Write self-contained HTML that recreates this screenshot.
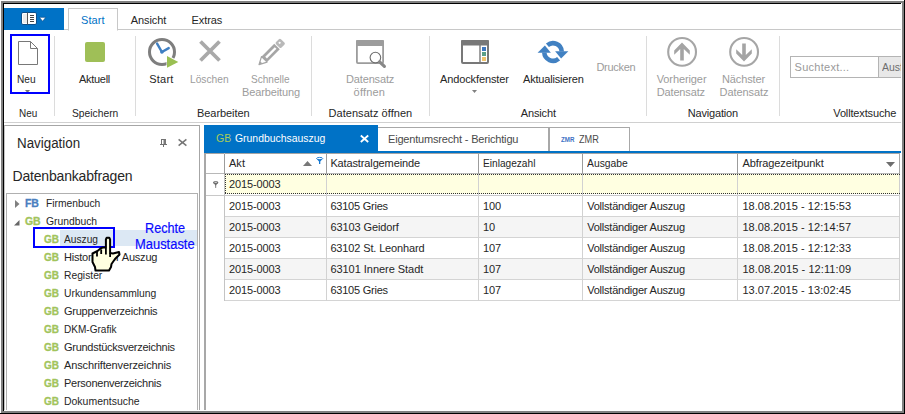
<!DOCTYPE html>
<html lang="de"><head><meta charset="utf-8"><title>Grundbuchsauszug</title>
<style>
html,body{margin:0;padding:0;}
body{width:905px;height:414px;position:relative;overflow:hidden;background:#fff;font-family:"Liberation Sans",sans-serif;font-size:11px;line-height:11px;color:#262626;}
.a{position:absolute;}
.t{position:absolute;white-space:nowrap;font-size:11px;line-height:11px;}
.sep{position:absolute;top:36px;width:1px;height:80px;background:#dcdcdc;}
svg{position:absolute;overflow:visible;}

</style></head><body>
<!-- window frame -->
<div class="a" style="left:1px;top:1px;width:899px;height:408px;border:2px solid #808080;"></div>
<div class="a" style="left:3px;top:3px;width:898px;height:1px;background:#000;"></div>
<div class="a" style="left:3px;top:3px;width:1px;height:408px;background:#000;"></div>
<div class="a" style="left:904px;top:0;width:1px;height:414px;background:#000;"></div>
<div class="a" style="left:0;top:413px;width:905px;height:1px;background:#000;"></div>

<!-- ribbon tab strip -->
<div class="a" style="left:4px;top:8px;width:60px;height:22px;background:#0072c6;"></div>
<div class="a" style="left:64px;top:29px;width:837px;height:1px;background:#c8c8c8;"></div>
<div class="a" style="left:68px;top:8px;width:48px;height:21px;border:1px solid #c8c8c8;border-bottom:1px solid #fff;background:#fff;"></div>
<!-- app button icon -->
<svg style="left:21px;top:12px" width="26" height="14" viewBox="0 0 26 14">
 <rect x="0.5" y="0.5" width="15" height="12" rx="1.5" fill="#fff" stroke="#0a4f8c"/>
 <rect x="2" y="2" width="4" height="9" fill="#ececec"/>
 <rect x="6" y="0.5" width="1" height="12" fill="#555"/>
 <path d="M9 3.5h4M9 5.5h4M9 7.5h4M9 9.5h4" stroke="#444" stroke-width="1"/>
 <path d="M18.300 5.300h6.600l-3.300 4z" fill="#fff" stroke="#0a4f8c" stroke-width="0.700"/>
</svg>

<!-- ribbon bottom -->
<div class="a" style="left:4px;top:122px;width:897px;height:1px;background:#d0d0d0;"></div>
<div class="sep" style="left:54px"></div>
<div class="sep" style="left:135px"></div>
<div class="sep" style="left:311px"></div>
<div class="sep" style="left:429px"></div>
<div class="sep" style="left:646px"></div>
<div class="sep" style="left:779px"></div>

<!-- Neu highlight box -->
<div class="a" style="left:10px;top:34px;width:36px;height:56px;border:2px solid #0000ff;z-index:3;"></div>
<!-- page icon -->
<svg style="left:18px;top:41px" width="20" height="24" viewBox="0 0 20 24">
 <path d="M0.5 0.5h12l7 7v16h-19z" fill="#fff" stroke="#787878"/>
 <path d="M12.5 0.5v7h7" fill="none" stroke="#787878"/>
</svg>
<svg style="left:25px;top:90px" width="5" height="3" viewBox="0 0 5 3"><path d="M0 0h5l-2.500 3z" fill="#777"/></svg>
<!-- green square -->
<div class="a" style="left:85px;top:42px;width:20px;height:20px;border-radius:2px;background:#9fbf57;"></div>
<!-- clock -->
<svg style="left:147px;top:37px" width="32" height="32" viewBox="0 0 32 32">
 <circle cx="15" cy="15" r="12.5" fill="#fff" stroke="#7e7e7e" stroke-width="3"/>
 <path d="M10.100 6.600l4.800 8.400 6.800-3.900" fill="none" stroke="#3f7fc2" stroke-width="2.400" stroke-linecap="round" stroke-linejoin="round"/>
 <circle cx="14.900" cy="15" r="1.800" fill="#3f7fc2"/>
 <path d="M19.500 17.500v14l13-7z" fill="#fff"/>
 <path d="M20 19v11.800l11.300-5.900z" fill="#9abf52"/>
</svg>
<!-- X -->
<svg style="left:199px;top:40px" width="22" height="22" viewBox="0 0 22 22">
 <path d="M1.500 1.500l19 19M20.500 1.500l-19 19" stroke="#a9a9a9" stroke-width="3.800"/>
</svg>
<!-- pencil -->
<svg style="left:259px;top:38px" width="27" height="27" viewBox="0 0 27 27">
 <g transform="translate(0,26.600) rotate(-45)">
  <path d="M0 0l7.500-3.900v7.800z" fill="#fff" stroke="#a6a6a6" stroke-width="1.200" stroke-linejoin="round"/>
  <path d="M0 0l3.200-1.700v3.400z" fill="#a6a6a6"/>
  <rect x="7.500" y="-3.900" width="18" height="7.800" fill="#a6a6a6"/>
  <rect x="10" y="-1.200" width="13.500" height="2.400" fill="#fff"/>
  <rect x="26.500" y="-3.900" width="7" height="7.800" rx="1.500" fill="#b9b9b9"/>
  <circle cx="30" cy="-0.800" r="1.100" fill="#fff"/>
 </g>
</svg>
<!-- window + magnifier -->
<svg style="left:356px;top:40px" width="31" height="28" viewBox="0 0 31 28">
 <rect x="0.900" y="0.900" width="26.200" height="22.200" rx="1" fill="#fff" stroke="#9c9c9c" stroke-width="1.800"/>
 <rect x="0" y="0" width="28" height="6" rx="1" fill="#9c9c9c"/>
 <circle cx="19.400" cy="17.600" r="5.300" fill="#fff" stroke="#6c6c6c" stroke-width="1.100"/>
 <path d="M23.600 21.800l4.800 4.600" stroke="#888" stroke-width="3.200" stroke-linecap="round"/>
</svg>
<!-- dock window -->
<svg style="left:461px;top:40px" width="28" height="24" viewBox="0 0 28 24">
 <rect x="1" y="1" width="26" height="22" rx="1" fill="#fff" stroke="#787878" stroke-width="2"/>
 <rect x="0" y="0" width="28" height="5.500" rx="1" fill="#787878"/>
 <rect x="18.300" y="5" width="1.400" height="18" fill="#787878"/>
 <rect x="21" y="7" width="4" height="4" fill="#3f78bf"/>
 <rect x="21" y="12" width="4" height="4" fill="#5a9e86"/>
 <rect x="21" y="17" width="4" height="4" fill="#f0c36d"/>
</svg>
<svg style="left:472px;top:90px" width="5" height="3" viewBox="0 0 5 3"><path d="M0 0h5l-2.500 3z" fill="#808080"/></svg>
<!-- refresh -->
<svg style="left:537px;top:40px" width="32" height="24" viewBox="0 0 32 24">
 <path d="M10.400 5.300A8.700 8.700 0 0 1 24.700 11.500" fill="none" stroke="#4181c2" stroke-width="4.600"/>
 <path d="M18.100 11.200h13.300l-7.300 7.300z" fill="#4181c2"/>
 <path d="M21.600 18.700A8.700 8.700 0 0 1 7.300 12.500" fill="none" stroke="#4181c2" stroke-width="4.600"/>
 <path d="M13.900 12.800h-13.300l7.300-7.300z" fill="#4181c2"/>
</svg>
<!-- up/down circles -->
<svg style="left:667px;top:37px" width="30" height="30" viewBox="0 0 30 30">
 <circle cx="15.100" cy="14.900" r="13.900" fill="#fff" stroke="#a6a6a6" stroke-width="2.100"/>
 <path d="M15 5.600l7.800 8v4.200l-6-5.800v11.500h-3.600v-11.500l-6 5.800v-4.200z" fill="#a4a4a4"/>
</svg>
<svg style="left:729px;top:37px" width="30" height="30" viewBox="0 0 30 30">
 <circle cx="15.100" cy="14.900" r="13.900" fill="#fff" stroke="#a6a6a6" stroke-width="2.100"/>
 <path d="M15 24.400l7.800-8v-4.200l-6 5.800v-11.500h-3.600v11.500l-6-5.800v4.200z" fill="#a4a4a4"/>
</svg>
<!-- search box -->
<div class="a" style="left:790px;top:56px;width:110px;height:20px;border:1px solid #b4b4b4;border-right:none;background:#fff;"></div>
<div class="a" style="left:878px;top:57px;width:22px;height:20px;background:#e8e8e8;border-left:1px solid #b4b4b4;overflow:hidden;"><span class="t" style="left:3px;top:5px;color:#6e6e6e;transform:scaleX(0.950);transform-origin:0 0;">Ausführen</span></div>

<!-- nav panel -->
<div class="a" style="left:4px;top:125px;width:194px;height:284px;border:1px solid #a6a6a6;border-left-color:#c4c4c4;border-bottom:none;"></div>
<div class="a" style="left:6px;top:193px;width:190px;height:216px;border:1px solid #b0b0b0;border-bottom:none;"></div>
<!-- pin / close -->
<svg style="left:160px;top:139px" width="7" height="8" viewBox="0 0 7 8">
 <rect x="1.500" y="0.500" width="4" height="5" fill="#fff" stroke="#707070" stroke-width="1"/>
 <rect x="3.500" y="0.500" width="2.500" height="5" fill="#7a7a7a"/>
 <path d="M0 5.500h7M3.500 6v2" fill="none" stroke="#707070" stroke-width="1"/>
</svg>
<svg style="left:178px;top:139px" width="9" height="7" viewBox="0 0 9 7">
 <path d="M0.600 0.300l7.800 6.400M8.400 0.300l-7.800 6.400" stroke="#767676" stroke-width="1.500"/>
</svg>
<!-- tree arrows -->
<svg style="left:15px;top:200px" width="5" height="8" viewBox="0 0 5 8"><path d="M0 0l4.500 4-4.500 4z" fill="#808080"/></svg>
<svg style="left:14px;top:219.500px" width="6" height="6" viewBox="0 0 6 6"><path d="M5.500 0v5.500h-5.500z" fill="#666"/></svg>
<!-- selection -->
<div class="a" style="left:60px;top:230px;width:137px;height:16px;background:#dce8f4;"></div>
<div class="a" style="left:33px;top:227px;width:78px;height:17px;border:2px solid #0000ff;z-index:4;"></div>
<!-- hand cursor -->
<svg style="left:88px;top:234px;z-index:6" width="36" height="40" viewBox="0 0 36 40">
 <path d="M17.900 5.500l0.800-1.700h2.600l0.800 1.700v13.500l2.900 0.500 6-1.500 0.500 2.500-4.500 4.500-3.500 5-0.500 3-2 3.500h-13.500l-0.500-3.500-2.500-5v-8.500l3-1.500 2-1 3-2.500 2-1h3.400z" fill="#ffffe1" stroke="#000" stroke-width="2" stroke-linejoin="round"/>
 <path d="M17.900 13.500v7M13.200 15.500v4.500M9 18v4.500M22.100 19v4" fill="none" stroke="#000" stroke-width="1.800"/>
</svg>

<!-- doc tabs -->
<div class="a" style="left:204px;top:125px;width:174px;height:27px;background:#0072c6;"></div>
<div class="a" style="left:204px;top:151px;width:697px;height:2px;background:#0072c6;"></div>
<div class="a" style="left:378px;top:127px;width:171px;height:24px;border-top:1px solid #a8a8a8;border-right:1px solid #a8a8a8;box-sizing:border-box;"></div>
<div class="a" style="left:549px;top:127px;width:81px;height:24px;border-top:1px solid #a8a8a8;border-right:1px solid #a8a8a8;border-left:1px solid #a8a8a8;box-sizing:border-box;"></div>
<svg style="left:360px;top:135px" width="9" height="8" viewBox="0 0 9 8">
 <path d="M0.800 0.500l7.400 6.500M8.200 0.500l-7.400 6.500" stroke="#fff" stroke-width="1.800"/>
</svg>

<!-- grid -->
<div class="a" style="left:204px;top:153px;width:2px;height:257px;background:#a8a8a8;"></div>
<div class="a" style="left:225px;top:174px;width:675px;height:20px;background:#ffffe1;"></div>
<div class="a" style="left:225px;top:216px;width:675px;height:21px;background:#f5f5f5;"></div>
<div class="a" style="left:225px;top:258px;width:675px;height:21px;background:#f5f5f5;"></div>
<!-- h lines -->
<div class="a" style="left:204px;top:153px;width:696px;height:1px;background:#a4a4a4;"></div>
<div class="a" style="left:206px;top:173px;width:694px;height:1px;background:#b8b8b8;"></div>
<div class="a" style="left:206px;top:195px;width:694px;height:1px;background:#c8c8c8;"></div>
<div class="a" style="left:224px;top:216px;width:676px;height:1px;background:#d4d4d4;"></div>
<div class="a" style="left:224px;top:237px;width:676px;height:1px;background:#d4d4d4;"></div>
<div class="a" style="left:224px;top:258px;width:676px;height:1px;background:#d4d4d4;"></div>
<div class="a" style="left:224px;top:279px;width:676px;height:1px;background:#d4d4d4;"></div>
<div class="a" style="left:224px;top:300px;width:676px;height:1px;background:#d4d4d4;"></div>
<!-- v lines -->
<div class="a" style="left:224px;top:153px;width:1px;height:148px;background:#c4c4c4;"></div>
<div class="a" style="left:326px;top:174px;width:1px;height:127px;background:#d2d2d2;"></div>
<div class="a" style="left:326px;top:154px;width:1px;height:20px;background:#9c9c9c;"></div>
<div class="a" style="left:478px;top:174px;width:1px;height:127px;background:#d2d2d2;"></div>
<div class="a" style="left:478px;top:154px;width:1px;height:20px;background:#9c9c9c;"></div>
<div class="a" style="left:582px;top:174px;width:1px;height:127px;background:#d2d2d2;"></div>
<div class="a" style="left:582px;top:154px;width:1px;height:20px;background:#9c9c9c;"></div>
<div class="a" style="left:737px;top:174px;width:1px;height:127px;background:#d2d2d2;"></div>
<div class="a" style="left:737px;top:154px;width:1px;height:20px;background:#9c9c9c;"></div>
<div class="a" style="left:224px;top:154px;width:1px;height:20px;background:#9c9c9c;"></div>
<div class="a" style="left:899px;top:153px;width:1px;height:148px;background:#cfcfcf;"></div>
<div class="a" style="left:899px;top:153px;width:1px;height:21px;background:#a8a8a8;"></div>
<!-- filter row dotted -->
<div class="a" style="left:225px;top:174px;width:675px;height:1px;background:repeating-linear-gradient(90deg,#333 0 1px,transparent 1px 2px);"></div>
<div class="a" style="left:225px;top:193px;width:675px;height:1px;background:repeating-linear-gradient(90deg,#333 0 1px,transparent 1px 2px);"></div>
<div class="a" style="left:225px;top:174px;width:1px;height:20px;background:repeating-linear-gradient(180deg,#333 0 1px,transparent 1px 2px);"></div>
<!-- header glyphs -->
<svg style="left:303px;top:161px" width="9" height="5" viewBox="0 0 9 5"><path d="M0 5l4.500-5 4.500 5z" fill="#777"/></svg>
<svg style="left:316px;top:157px" width="8" height="7" viewBox="0 0 8 7"><path d="M0.600 1.800l2.400 2.600v2.600h1.300v-2.600l2.400-2.600z" fill="#1478d2"/><ellipse cx="3.650" cy="1.500" rx="3.100" ry="1.100" fill="#fff" stroke="#1478d2" stroke-width="0.900"/></svg>
<svg style="left:886px;top:162px" width="9" height="5" viewBox="0 0 9 5"><path d="M0 0h9l-4.500 5z" fill="#6e6e6e"/></svg>
<svg style="left:212.800px;top:181.200px" width="6" height="7" viewBox="0 0 6 7"><path d="M0.300 1.600l2.400 3.200 2.400-3.200z" fill="#6e6e6e"/><ellipse cx="2.700" cy="1.500" rx="2.700" ry="1.500" fill="#6e6e6e"/><ellipse cx="2.700" cy="1.300" rx="1.300" ry="0.500" fill="#e8e8e8"/><path d="M2.700 3.500v3.400" stroke="#6e6e6e" stroke-width="0.900"/></svg>

<div id="texts">
<span class="t" style="left:81.0px;top:15px;color:#0072c6;letter-spacing:0.09px;">Start</span>
<span class="t" style="left:130.7px;top:15px;letter-spacing:-0.07px;">Ansicht</span>
<span class="t" style="left:191.5px;top:15px;letter-spacing:-0.08px;">Extras</span>
<span class="t" style="left:17.4px;top:74px;transform:scaleX(0.921);transform-origin:0 0;">Neu</span>
<span class="t" style="left:79.0px;top:74px;letter-spacing:-0.29px;">Aktuell</span>
<span class="t" style="left:149.3px;top:74px;letter-spacing:0.19px;">Start</span>
<span class="t" style="left:190.4px;top:74px;color:#9c9c9c;transform:scaleX(0.928);transform-origin:0 0;">Löschen</span>
<span class="t" style="left:250.8px;top:74px;color:#9c9c9c;transform:scaleX(0.915);transform-origin:0 0;">Schnelle</span>
<span class="t" style="left:242.0px;top:87px;color:#9c9c9c;letter-spacing:-0.12px;">Bearbeitung</span>
<span class="t" style="left:346.0px;top:74px;color:#9c9c9c;letter-spacing:-0.15px;">Datensatz</span>
<span class="t" style="left:353.6px;top:87px;color:#9c9c9c;letter-spacing:0.17px;">öffnen</span>
<span class="t" style="left:440.0px;top:74px;letter-spacing:-0.12px;">Andockfenster</span>
<span class="t" style="left:523.0px;top:74px;letter-spacing:-0.18px;">Aktualisieren</span>
<span class="t" style="left:596.4px;top:62px;color:#9c9c9c;letter-spacing:-0.28px;">Drucken</span>
<span class="t" style="left:656.7px;top:74px;color:#9c9c9c;letter-spacing:-0.10px;">Vorheriger</span>
<span class="t" style="left:656.7px;top:87px;color:#9c9c9c;letter-spacing:-0.14px;">Datensatz</span>
<span class="t" style="left:722.0px;top:74px;color:#9c9c9c;letter-spacing:-0.13px;">Nächster</span>
<span class="t" style="left:719.6px;top:87px;color:#9c9c9c;letter-spacing:-0.09px;">Datensatz</span>
<span class="t" style="left:794.6px;top:62px;color:#9a9a9a;letter-spacing:0.26px;">Suchtext...</span>
<span class="t" style="left:18.8px;top:108px;transform:scaleX(0.902);transform-origin:0 0;">Neu</span>
<span class="t" style="left:71.7px;top:108px;transform:scaleX(0.934);transform-origin:0 0;">Speichern</span>
<span class="t" style="left:197.0px;top:108px;letter-spacing:-0.06px;">Bearbeiten</span>
<span class="t" style="left:328.5px;top:108px;letter-spacing:0.05px;">Datensatz öffnen</span>
<span class="t" style="left:520.8px;top:108px;letter-spacing:-0.15px;">Ansicht</span>
<span class="t" style="left:687.7px;top:108px;letter-spacing:-0.17px;">Navigation</span>
<span class="t" style="left:833.3px;top:108px;letter-spacing:-0.15px;">Volltextsuche</span>
<span class="t" style="left:17.4px;top:136px;font-size:14px;line-height:14px;transform:scaleX(0.954);transform-origin:0 0;">Navigation</span>
<span class="t" style="left:12.5px;top:169px;font-size:14px;line-height:14px;letter-spacing:-0.18px;">Datenbankabfragen</span>
<span class="t" style="left:25.0px;top:198px;font-size:10.5px;line-height:10.5px;color:#4a7fbf;font-weight:bold;letter-spacing:-0.15px;-webkit-text-stroke:0.3px;">FB</span>
<span class="t" style="left:45.7px;top:198px;transform:scaleX(0.935);transform-origin:0 0;">Firmenbuch</span>
<span class="t" style="left:25.0px;top:216px;font-size:10.5px;line-height:10.5px;color:#a2c45c;font-weight:bold;letter-spacing:-0.18px;-webkit-text-stroke:0.3px;">GB</span>
<span class="t" style="left:45.7px;top:216px;transform:scaleX(0.939);transform-origin:0 0;">Grundbuch</span>
<span class="t" style="left:43.5px;top:234px;font-size:10.5px;line-height:10.5px;color:#a2c45c;font-weight:bold;transform:scaleX(0.952);transform-origin:0 0;-webkit-text-stroke:0.3px;">GB</span>
<span class="t" style="left:64.0px;top:234px;transform:scaleX(0.926);transform-origin:0 0;">Auszug</span>
<span class="t" style="left:43.5px;top:270px;font-size:10.5px;line-height:10.5px;color:#a2c45c;font-weight:bold;transform:scaleX(0.952);transform-origin:0 0;-webkit-text-stroke:0.3px;">GB</span>
<span class="t" style="left:64.0px;top:270px;transform:scaleX(0.935);transform-origin:0 0;">Register</span>
<span class="t" style="left:43.5px;top:288px;font-size:10.5px;line-height:10.5px;color:#a2c45c;font-weight:bold;transform:scaleX(0.952);transform-origin:0 0;-webkit-text-stroke:0.3px;">GB</span>
<span class="t" style="left:64.0px;top:288px;transform:scaleX(0.938);transform-origin:0 0;">Urkundensammlung</span>
<span class="t" style="left:43.5px;top:306px;font-size:10.5px;line-height:10.5px;color:#a2c45c;font-weight:bold;transform:scaleX(0.952);transform-origin:0 0;-webkit-text-stroke:0.3px;">GB</span>
<span class="t" style="left:64.0px;top:306px;letter-spacing:-0.25px;">Gruppenverzeichnis</span>
<span class="t" style="left:43.5px;top:324px;font-size:10.5px;line-height:10.5px;color:#a2c45c;font-weight:bold;transform:scaleX(0.952);transform-origin:0 0;-webkit-text-stroke:0.3px;">GB</span>
<span class="t" style="left:64.0px;top:324px;transform:scaleX(0.914);transform-origin:0 0;">DKM-Grafik</span>
<span class="t" style="left:43.5px;top:342px;font-size:10.5px;line-height:10.5px;color:#a2c45c;font-weight:bold;transform:scaleX(0.952);transform-origin:0 0;-webkit-text-stroke:0.3px;">GB</span>
<span class="t" style="left:64.0px;top:342px;letter-spacing:-0.27px;">Grundstücksverzeichnis</span>
<span class="t" style="left:43.5px;top:360px;font-size:10.5px;line-height:10.5px;color:#a2c45c;font-weight:bold;transform:scaleX(0.952);transform-origin:0 0;-webkit-text-stroke:0.3px;">GB</span>
<span class="t" style="left:64.0px;top:360px;letter-spacing:-0.13px;">Anschriftenverzeichnis</span>
<span class="t" style="left:43.5px;top:378px;font-size:10.5px;line-height:10.5px;color:#a2c45c;font-weight:bold;transform:scaleX(0.952);transform-origin:0 0;-webkit-text-stroke:0.3px;">GB</span>
<span class="t" style="left:64.0px;top:378px;letter-spacing:-0.26px;">Personenverzeichnis</span>
<span class="t" style="left:43.5px;top:396px;font-size:10.5px;line-height:10.5px;color:#a2c45c;font-weight:bold;transform:scaleX(0.952);transform-origin:0 0;-webkit-text-stroke:0.3px;">GB</span>
<span class="t" style="left:64.0px;top:396px;transform:scaleX(0.951);transform-origin:0 0;">Dokumentsuche</span>
<span class="t" style="left:43.5px;top:252px;font-size:10.5px;line-height:10.5px;color:#a2c45c;font-weight:bold;transform:scaleX(0.952);transform-origin:0 0;-webkit-text-stroke:0.3px;">GB</span>
<span class="t" style="left:64.0px;top:252px;letter-spacing:-0.21px;">Historischer Auszug</span>
<span class="t" style="left:145.3px;top:221px;font-size:14px;line-height:14px;color:#0a0aff;transform:scaleX(0.904);transform-origin:0 0;z-index:5;-webkit-text-stroke:0.2px;">Rechte</span>
<span class="t" style="left:135.4px;top:237px;font-size:14px;line-height:14px;color:#0a0aff;transform:scaleX(0.923);transform-origin:0 0;z-index:5;-webkit-text-stroke:0.2px;">Maustaste</span>
<span class="t" style="left:216.0px;top:133px;font-size:10.5px;line-height:10.5px;color:#a9cc5a;letter-spacing:0.11px;">GB</span>
<span class="t" style="left:235.0px;top:133px;color:#fff;transform:scaleX(0.946);transform-origin:0 0;">Grundbuchsauszug</span>
<span class="t" style="left:388.0px;top:134px;color:#4a4a4a;letter-spacing:-0.18px;">Eigentumsrecht - Berichtigu</span>
<span class="t" style="left:561.4px;top:136px;font-size:7px;line-height:7px;color:#3f72c4;font-weight:bold;transform:scaleX(0.883);transform-origin:0 0;">ZMR</span>
<span class="t" style="left:579.2px;top:134px;color:#4a4a4a;transform:scaleX(0.835);transform-origin:0 0;">ZMR</span>
<span class="t" style="left:229.0px;top:158px;letter-spacing:0.03px;">Akt</span>
<span class="t" style="left:330.4px;top:158px;letter-spacing:-0.13px;">Katastralgemeinde</span>
<span class="t" style="left:482.6px;top:158px;transform:scaleX(0.921);transform-origin:0 0;">Einlagezahl</span>
<span class="t" style="left:587.0px;top:158px;transform:scaleX(0.939);transform-origin:0 0;">Ausgabe</span>
<span class="t" style="left:742.4px;top:158px;letter-spacing:-0.08px;">Abfragezeitpunkt</span>
<span class="t" style="left:229.0px;top:179px;letter-spacing:-0.12px;">2015-0003</span>
<span class="t" style="left:229.0px;top:201px;letter-spacing:-0.12px;">2015-0003</span>
<span class="t" style="left:330.4px;top:201px;letter-spacing:-0.23px;">63105 Gries</span>
<span class="t" style="left:482.9px;top:201px;letter-spacing:-0.02px;">100</span>
<span class="t" style="left:587.2px;top:201px;letter-spacing:-0.22px;">Vollständiger Auszug</span>
<span class="t" style="left:742.4px;top:201px;letter-spacing:0.05px;">18.08.2015 - 12:15:53</span>
<span class="t" style="left:229.0px;top:222px;letter-spacing:-0.12px;">2015-0003</span>
<span class="t" style="left:330.4px;top:222px;letter-spacing:-0.10px;">63103 Geidorf</span>
<span class="t" style="left:482.9px;top:222px;letter-spacing:-0.07px;">10</span>
<span class="t" style="left:587.2px;top:222px;letter-spacing:-0.22px;">Vollständiger Auszug</span>
<span class="t" style="left:742.4px;top:222px;letter-spacing:0.05px;">18.08.2015 - 12:14:57</span>
<span class="t" style="left:229.0px;top:243px;letter-spacing:-0.12px;">2015-0003</span>
<span class="t" style="left:330.4px;top:243px;letter-spacing:-0.14px;">63102 St. Leonhard</span>
<span class="t" style="left:482.9px;top:243px;letter-spacing:-0.02px;">107</span>
<span class="t" style="left:587.2px;top:243px;letter-spacing:-0.22px;">Vollständiger Auszug</span>
<span class="t" style="left:742.4px;top:243px;letter-spacing:0.05px;">18.08.2015 - 12:12:33</span>
<span class="t" style="left:229.0px;top:264px;letter-spacing:-0.12px;">2015-0003</span>
<span class="t" style="left:330.4px;top:264px;letter-spacing:-0.04px;">63101 Innere Stadt</span>
<span class="t" style="left:482.9px;top:264px;letter-spacing:-0.02px;">107</span>
<span class="t" style="left:587.2px;top:264px;letter-spacing:-0.22px;">Vollständiger Auszug</span>
<span class="t" style="left:742.4px;top:264px;letter-spacing:0.09px;">18.08.2015 - 12:11:09</span>
<span class="t" style="left:229.0px;top:285px;letter-spacing:-0.12px;">2015-0003</span>
<span class="t" style="left:330.4px;top:285px;letter-spacing:-0.23px;">63105 Gries</span>
<span class="t" style="left:482.9px;top:285px;letter-spacing:-0.02px;">107</span>
<span class="t" style="left:587.2px;top:285px;letter-spacing:-0.22px;">Vollständiger Auszug</span>
<span class="t" style="left:742.4px;top:285px;letter-spacing:0.05px;">13.07.2015 - 13:02:45</span>
</div>
</body></html>
